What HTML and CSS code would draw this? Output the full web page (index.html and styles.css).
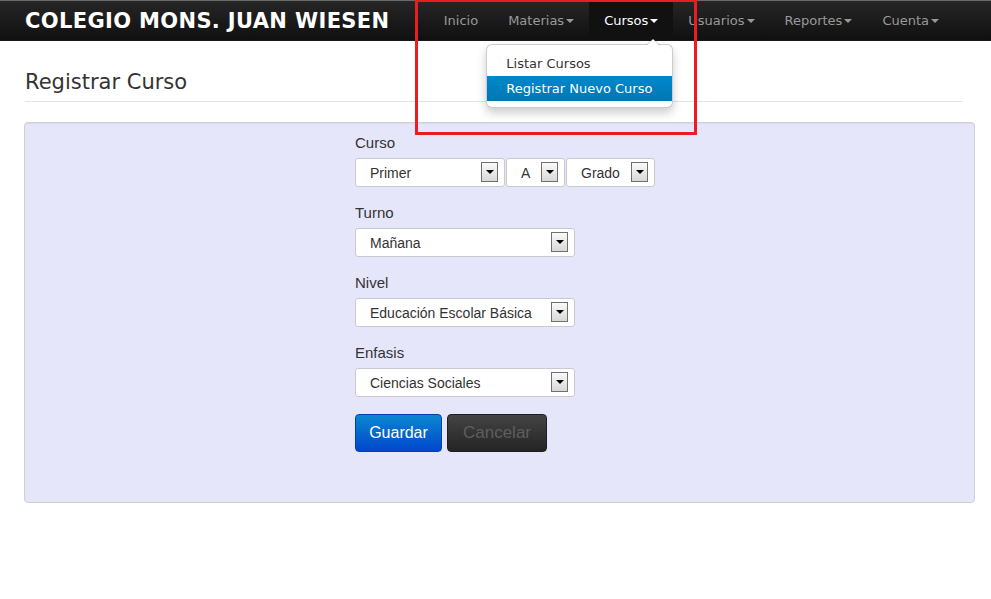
FILE: index.html
```html
<!DOCTYPE html>
<html lang="es">
<head>
<meta charset="utf-8">
<title>Registrar Curso</title>
<link rel="stylesheet" href="styles.css">
</head>
<body>
<header class="navbar">
  <div class="brand">COLEGIO MONS. JUAN WIESEN</div>
  <nav class="nav">
    <span class="nav-item">Inicio</span>
    <span class="nav-item">Materias<b class="caret"></b></span>
    <span class="nav-item active">Cursos<b class="caret"></b>
      <div class="dropdown">
        <div class="dd-item">Listar Cursos</div>
        <div class="dd-item selected">Registrar Nuevo Curso</div>
      </div>
    </span>
    <span class="nav-item">Usuarios<b class="caret"></b></span>
    <span class="nav-item">Reportes<b class="caret"></b></span>
    <span class="nav-item">Cuenta<b class="caret"></b></span>
  </nav>
</header>
<div class="annotation"></div>
<main class="page">
  <h1 class="page-title">Registrar Curso</h1>
  <section class="well">
    <form class="form">
      <div class="group">
        <label class="label">Curso</label>
        <div class="row">
          <div class="select w-primer"><span class="value">Primer</span><span class="arrow"></span></div>
          <div class="select w-a"><span class="value">A</span><span class="arrow"></span></div>
          <div class="select w-grado"><span class="value">Grado</span><span class="arrow"></span></div>
        </div>
      </div>
      <div class="group">
        <label class="label">Turno</label>
        <div class="select w-full"><span class="value">Mañana</span><span class="arrow"></span></div>
      </div>
      <div class="group">
        <label class="label">Nivel</label>
        <div class="select w-full"><span class="value">Educación Escolar Básica</span><span class="arrow"></span></div>
      </div>
      <div class="group last">
        <label class="label">Enfasis</label>
        <div class="select w-full"><span class="value">Ciencias Sociales</span><span class="arrow"></span></div>
      </div>
      <div class="actions">
        <button type="button" class="btn btn-primary">Guardar</button>
        <button type="button" class="btn btn-inverse">Cancelar</button>
      </div>
    </form>
  </section>
</main>
</body>
</html>
```

FILE: styles.css
```css
* { box-sizing: border-box; }
html, body { margin: 0; padding: 0; background: #fff; }
body { font-family: "DejaVu Sans", Verdana, sans-serif; color: #333; }

.navbar {
  height: 41px;
  display: flex;
  align-items: center;
  background: linear-gradient(#262626, #101010);
  border-top: 1px solid #6a6a6a;
  border-bottom: 1px solid #1a1a1a;
  padding-left: 25px;
  position: relative;
}
.brand {
  font-family: "DejaVu Sans", Verdana, sans-serif;
  font-weight: bold;
  font-size: 21px;
  letter-spacing: 0.35px;
  color: #fff;
  white-space: nowrap;
}
.nav {
  margin-left: auto;
  margin-right: 37px;
  display: flex;
  height: 39px;
}
.nav-item {
  position: relative;
  display: flex;
  align-items: center;
  padding: 0 15px;
  font-size: 13px;
  color: #999;
  white-space: nowrap;
}
.nav-item.active {
  background: #111;
  color: #fff;
}
.caret {
  display: inline-block;
  width: 0; height: 0;
  margin-left: 2px;
  margin-top: 1px;
  border-left: 4px solid transparent;
  border-right: 4px solid transparent;
  border-top: 4px solid #999;
}
.active .caret { border-top-color: #fff; }

.dropdown {
  position: absolute;
  top: 43px;
  right: 0;
  width: 187px;
  background: #fff;
  border: 1px solid rgba(0,0,0,0.2);
  border-radius: 6px;
  box-shadow: 0 5px 10px rgba(0,0,0,0.2);
  padding: 6px 0 6px;
  z-index: 5;
}
.dropdown::before {
  content: "";
  position: absolute;
  top: -7px;
  right: 12px;
  border-left: 7px solid transparent;
  border-right: 7px solid transparent;
  border-bottom: 7px solid rgba(0,0,0,0.2);
}
.dropdown::after {
  content: "";
  position: absolute;
  top: -6px;
  right: 13px;
  border-left: 6px solid transparent;
  border-right: 6px solid transparent;
  border-bottom: 6px solid #fff;
}
.dd-item {
  height: 25px;
  line-height: 25px;
  padding-left: 19px;
  font-size: 13px;
  color: #333;
}
.dd-item.selected {
  background: linear-gradient(#0088cc, #0077b3);
  color: #fff;
}

.annotation {
  position: absolute;
  left: 415px;
  top: -1px;
  width: 282px;
  height: 136px;
  border: 3px solid #ed1c24;
  z-index: 10;
  pointer-events: none;
}

.page {
  padding: 0 16px 0 24px;
}
.page-title {
  margin: 29px 12px 0 1px;
  padding-bottom: 6px;
  font-size: 21px;
  line-height: 25px;
  font-weight: normal;
  color: #333;
  border-bottom: 1px solid #e3e3e3;
}
.well {
  margin-top: 20px;
  height: 381px;
  background: #e6e6fa;
  border: 1px solid #cfcfd8;
  border-radius: 4px;
  box-shadow: inset 0 1px 1px rgba(0,0,0,0.05);
  padding: 10px 0 0 330px;
}
.form {
  font-family: "Liberation Sans", Arial, sans-serif;
}
.group { margin-bottom: 16px; }
.group.last { margin-bottom: 16px; }
.label {
  display: block;
  font-size: 15px;
  line-height: 20px;
  color: #333;
  margin-bottom: 5px;
}
.row { display: flex; gap: 1px; }
.select {
  position: relative;
  flex: none;
  height: 29px;
  display: flex;
  align-items: center;
  background: #fff;
  border: 1px solid #c9c9d2;
  border-radius: 3px;
  padding-left: 14px;
  padding-right: 6px;
  font-size: 14px;
  color: #333;
}
.select .value { flex: 1; white-space: nowrap; }
.select .arrow {
  width: 17px;
  height: 20px;
  border: 1px solid #707070;
  background: linear-gradient(#fafafa, #d8d8d8);
  display: flex;
  align-items: center;
  justify-content: center;
  margin-top: -1px;
}
.select .arrow::after {
  content: "";
  width: 0; height: 0;
  border-left: 4px solid transparent;
  border-right: 4px solid transparent;
  border-top: 4px solid #000;
}
.w-primer { width: 150px; }
.w-a { width: 59px; }
.w-grado { width: 89px; }
.w-full { width: 220px; }

.actions { display: flex; gap: 5px; padding-top: 1px; }
.btn {
  height: 38px;
  border-radius: 4px;
  font-family: "Liberation Sans", Arial, sans-serif;
  padding: 0;
  cursor: pointer;
}
.btn-primary {
  width: 87px;
  font-size: 16px;
  color: #fff;
  background: linear-gradient(#0a88d0, #0046cc);
  border: 1px solid #0040b0;
}
.btn-inverse {
  width: 100px;
  font-size: 17px;
  color: #5e5e5e;
  background: linear-gradient(#444, #242424);
  border: 1px solid #1e1e1e;
}
```
